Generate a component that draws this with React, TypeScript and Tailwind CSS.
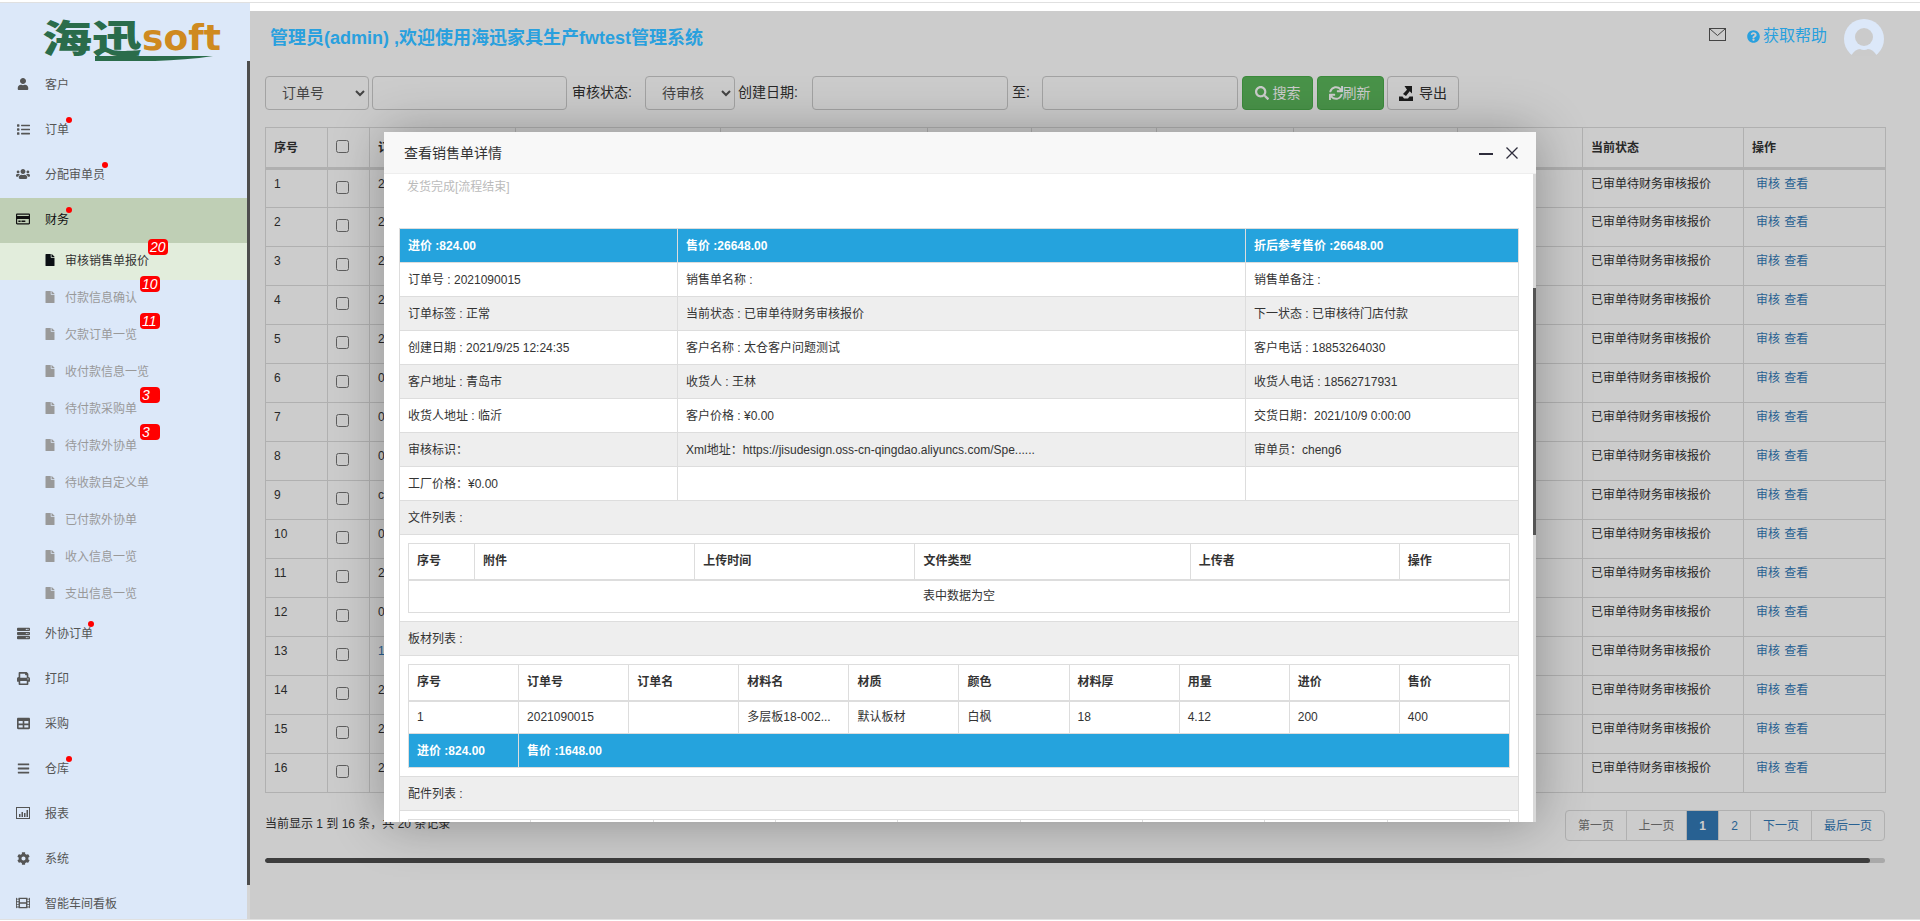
import React from 'react';
import {
  FaUser, FaList, FaUsers, FaRegCreditCard, FaFile, FaServer, FaPrint, FaTable,
  FaBars, FaCog, FaFilm, FaSearch, FaSync, FaQuestionCircle,
} from 'react-icons/fa';

const ReportIcon = () => (
  <svg width="14" height="12" viewBox="0 0 14 12" fill="currentColor">
    <path d="M0 0h14v12H0zM1 1v10h12V1z" fillRule="evenodd" />
    <path d="M3 7h1.5v3H3zM5.5 5H7v5H5.5zM8 6h1.5v4H8zM10.5 3H12v7h-1.5z" />
  </svg>
);

const ExportIcon = () => (
  <svg width="14" height="15" viewBox="0 0 14 15" fill="#222">
    <path d="M0 15v-4.5h3.5L5 12.5h4l1.5-2H14V15z" />
    <path d="M5.5 0H13v7.5l-2.3-2.3L7 10 4 8l4-4.2z" />
  </svg>
);

const menuTop = [
  { label: '客户', icon: <FaUser size={12} /> },
  { label: '订单', icon: <FaList size={13} />, dot: 'right-[-3px] top-[-5px]' },
  { label: '分配审单员', icon: <FaUsers size={14} />, dot: 'right-[-3px] top-[-5px]' },
  { label: '财务', icon: <FaRegCreditCard size={14} />, dot: 'right-[-3px] top-[-5px]', active: true },
];

const menuSub = [
  { label: '审核销售单报价', badge: '20', pos: 'left-[148px]', active: true },
  { label: '付款信息确认', badge: '10', pos: 'left-[140px]' },
  { label: '欠款订单一览', badge: '11', pos: 'left-[140px]' },
  { label: '收付款信息一览' },
  { label: '待付款采购单', badge: '3', pos: 'left-[140px]' },
  { label: '待付款外协单', badge: '3', pos: 'left-[140px]' },
  { label: '待收款自定义单' },
  { label: '已付款外协单' },
  { label: '收入信息一览' },
  { label: '支出信息一览' },
];

const menuBottom = [
  { label: '外协订单', icon: <FaServer size={13} />, dot: 'right-[-1px] top-[-5px]' },
  { label: '打印', icon: <FaPrint size={13} /> },
  { label: '采购', icon: <FaTable size={13} /> },
  { label: '仓库', icon: <FaBars size={13} />, dot: 'right-[-3px] top-[-5px]' },
  { label: '报表', icon: <ReportIcon /> },
  { label: '系统', icon: <FaCog size={13} /> },
  { label: '智能车间看板', icon: <FaFilm size={14} /> },
];

type MenuItem = { label: string; icon: React.ReactNode; dot?: string; active?: boolean };

const MainItem = ({ item }: { item: MenuItem }) => (
  <div className={`flex items-center h-[45px] pl-4 ${item.active ? 'bg-[#bfcfb5] text-[#111]' : 'text-[#555]'}`}>
    <span className="w-[14px] flex justify-center mb-[3px]">{item.icon}</span>
    <span className="relative ml-[15px] leading-[17px] mt-[-1px]">
      {item.label}
      {item.dot && <i className={`absolute w-[6px] h-[6px] rounded-full bg-[#f00] ${item.dot}`}></i>}
    </span>
  </div>
);

const Sidebar = () => (
  <aside className="relative z-40 flex w-[250px] shrink-0 bg-[#dce8f9] text-xs overflow-hidden">
    <div className="w-[247px] shrink-0">
      <div className="relative flex items-center h-[60px] pl-[42px]">
        <span className="font-['Noto_Sans_CJK_SC',sans-serif] font-black text-[50px] leading-none text-[#2a6c4b] scale-y-[0.76] translate-y-[2px]">海迅</span>
        <span className="font-['DejaVu_Sans',sans-serif] font-bold text-[36px] leading-none text-[#cf8a20] translate-y-[5px]">soft</span>
        <svg className="absolute left-[95px] top-[51px]" width="120" height="7" viewBox="0 0 120 7" fill="#2a6c4b">
          <path d="M0 2h118C100 5 80 6 60 7H0z" />
        </svg>
      </div>
      {menuTop.map((item) => <MainItem key={item.label} item={item} />)}
      {menuSub.map((item) => (
        <div
          key={item.label}
          className={`relative flex items-center h-[37px] pl-[44px] ${item.active ? 'bg-[#e2eddc] text-[#333]' : 'text-[#999]'}`}
        >
          <FaFile size={12} className={`mb-[3px] ${item.active ? 'text-[#0a0f14]' : 'text-[#999]'}`} />
          <span className="ml-[9px] mt-[-1px]">{item.label}</span>
          {item.badge && (
            <span className={`absolute top-[-4px] ${item.pos} w-[20px] h-[16px] rounded-[4px] bg-[#f00] text-white italic text-sm leading-[16px] pl-[2px]`}>
              {item.badge}
            </span>
          )}
        </div>
      ))}
      <div className="mt-[-1px]">
        {menuBottom.map((item) => <MainItem key={item.label} item={item} />)}
      </div>
    </div>
    <div className="flex flex-col w-[3px]">
      <div className="h-[58px] shrink-0"></div>
      <div className="h-[824px] shrink-0 bg-[#4d4d4d]"></div>
      <div className="flex-1 bg-[#d5d5d5]"></div>
    </div>
  </aside>
);

const colWidths = [
  'w-[62px]', 'w-[42px]', 'w-[146px]', 'w-[205px]', 'w-[207px]', 'w-[104px]',
  'w-[125px]', 'w-[137px]', 'w-[164px]', 'w-[125px]', 'w-[161px]', 'w-[142px]',
];

// only the first character of each order number shows beside the dialog
const orderChars = ['2', '2', '2', '2', '2', '0', '0', '0', 'c', '0', '2', '0', '1', '2', '2', '2'];

const BackgroundTable = () => (
  <table className="table-fixed w-[1620px] border-collapse text-xs text-[#333]">
    <colgroup>
      {colWidths.map((w, i) => <col key={i} className={w} />)}
    </colgroup>
    <thead>
      <tr className="h-[41px]">
        {colWidths.map((_, i) => (
          <th key={i} className="border border-[#ddd] border-b-[3px] px-2 text-left font-bold">
            {i === 0 && '序号'}
            {i === 1 && <input type="checkbox" className="block mb-[2px]" />}
            {i === 2 && '订'}
            {i === 10 && '当前状态'}
            {i === 11 && '操作'}
          </th>
        ))}
      </tr>
    </thead>
    <tbody>
      {orderChars.map((order, r) => (
        <tr key={r} className="h-[39px]">
          <td className="border border-[#ddd] px-2 pt-[6px] align-top leading-[17px]">{r + 1}</td>
          <td className="border border-[#ddd] align-top pl-2 pt-[11px]">
            <input type="checkbox" className="block" />
          </td>
          <td className={`border border-[#ddd] px-2 pt-[6px] align-top leading-[17px] ${r === 12 ? 'text-[#337ab7]' : ''}`}>{order}</td>
          {[3, 4, 5, 6, 7, 8, 9].map((c) => <td key={c} className="border border-[#ddd]"></td>)}
          <td className="border border-[#ddd] px-2 pt-[6px] align-top leading-[17px]">已审单待财务审核报价</td>
          <td className="border border-[#ddd] pl-[12px] pt-[6px] align-top leading-[17px] text-[#337ab7]">
            审核 <span className="ml-[1px]">查看</span>
          </td>
        </tr>
      ))}
    </tbody>
  </table>
);

const infoRows = [
  ['订单号 : 2021090015', '销售单名称 :', '销售单备注 :'],
  ['订单标签 : 正常', '当前状态 : 已审单待财务审核报价', '下一状态 : 已审核待门店付款'],
  ['创建日期 : 2021/9/25 12:24:35', '客户名称 : 太仓客户问题测试', '客户电话 : 18853264030'],
  ['客户地址 : 青岛市', '收货人 : 王林', '收货人电话 : 18562717931'],
  ['收货人地址 : 临沂', '客户价格 : ¥0.00', '交货日期：2021/10/9 0:00:00'],
  ['审核标识：', 'Xml地址：https://jisudesign.oss-cn-qingdao.aliyuncs.com/Spe......', '审单员：cheng6'],
  ['工厂价格：¥0.00', '', ''],
];

const fileCols = [
  { label: '序号', w: 'w-[66px]' },
  { label: '附件', w: 'w-[220px]' },
  { label: '上传时间', w: 'w-[220px]' },
  { label: '文件类型', w: 'w-[275px]' },
  { label: '上传者', w: 'w-[209px]' },
  { label: '操作', w: 'w-[110px]' },
];

const boardCols = ['序号', '订单号', '订单名', '材料名', '材质', '颜色', '材料厚', '用量', '进价', '售价'];
const boardRow = ['1', '2021090015', '', '多层板18-002...', '默认板材', '白枫', '18', '4.12', '200', '400'];

const SectionRow = ({ label }: { label: string }) => (
  <tr className="h-[34px] bg-[#eee]">
    <td colSpan={3} className="border border-[#ddd] px-2">{label}</td>
  </tr>
);

const Modal = () => (
  <div className="absolute left-[134px] top-[121px] z-30 flex flex-col w-[1152px] h-[690px] bg-white text-xs text-[#333] shadow-[1px_1px_50px_rgba(0,0,0,0.3)]">
    <div className="flex items-center justify-between shrink-0 h-[42px] bg-[#f8f8f8] border-b border-[#eee] pl-5 pr-[18px]">
      <span className="text-sm">查看销售单详情</span>
      <div className="flex items-center gap-[13px]">
        <i className="block w-[14px] h-[2px] bg-[#2e2d3c] mt-[2px]"></i>
        <svg width="12" height="12" viewBox="0 0 12 12" stroke="#2e2d3c" strokeWidth="1.3" fill="none">
          <path d="M0.5 0.5l11 11M11.5 0.5l-11 11" />
        </svg>
      </div>
    </div>
    <div className="flex flex-1 min-h-0">
      <div className="flex-1 min-w-0 overflow-hidden pl-[15px] pr-[15px]">
        <p className="pl-2 pt-[5px] h-[54px] leading-[17px] text-[#bbb]">发货完成[流程结束]</p>
        <table className="table-fixed w-[1119px] border-collapse">
          <colgroup>
            <col className="w-[278px]" />
            <col className="w-[568px]" />
            <col className="w-[273px]" />
          </colgroup>
          <tbody>
            <tr className="h-[34px] bg-[#25a3dd] text-white font-bold">
              <td className="border border-[#ddd] px-2">进价 :824.00</td>
              <td className="border border-[#ddd] px-2">售价 :26648.00</td>
              <td className="border border-[#ddd] px-2">折后参考售价 :26648.00</td>
            </tr>
            {infoRows.map((row, i) => (
              <tr key={i} className={`h-[34px] ${i % 2 === 1 ? 'bg-[#eee]' : ''}`}>
                {row.map((cell, c) => <td key={c} className="border border-[#ddd] px-2">{cell}</td>)}
              </tr>
            ))}
            <SectionRow label="文件列表 :" />
            <tr>
              <td colSpan={3} className="border border-[#ddd] p-2">
                <table className="table-fixed w-full border-collapse">
                  <colgroup>{fileCols.map((c) => <col key={c.label} className={c.w} />)}</colgroup>
                  <thead>
                    <tr className="h-[36px]">
                      {fileCols.map((c) => (
                        <th key={c.label} className="border border-[#ddd] border-b-2 px-2 text-left font-bold">{c.label}</th>
                      ))}
                    </tr>
                  </thead>
                  <tbody>
                    <tr className="h-[33px]">
                      <td colSpan={6} className="border border-[#ddd] text-center">表中数据为空</td>
                    </tr>
                  </tbody>
                </table>
              </td>
            </tr>
            <SectionRow label="板材列表 :" />
            <tr>
              <td colSpan={3} className="border border-[#ddd] p-2">
                <table className="table-fixed w-full border-collapse">
                  <thead>
                    <tr className="h-[36px]">
                      {boardCols.map((c) => (
                        <th key={c} className="border border-[#ddd] border-b-2 px-2 text-left font-bold">{c}</th>
                      ))}
                    </tr>
                  </thead>
                  <tbody>
                    <tr className="h-[33px]">
                      {boardRow.map((c, i) => <td key={i} className="border border-[#ddd] px-2 truncate">{c}</td>)}
                    </tr>
                    <tr className="h-[34px] bg-[#25a3dd] text-white font-bold">
                      <td className="border border-[#ddd] px-2">进价 :824.00</td>
                      <td colSpan={9} className="border border-[#ddd] px-2">售价 :1648.00</td>
                    </tr>
                  </tbody>
                </table>
              </td>
            </tr>
            <SectionRow label="配件列表 :" />
            <tr>
              <td colSpan={3} className="border border-[#ddd] p-2">
                <table className="table-fixed w-full border-collapse">
                  <tbody>
                    <tr className="h-[36px]">
                      {Array.from({ length: 9 }).map((_, i) => <td key={i} className="border border-[#ddd]"></td>)}
                    </tr>
                  </tbody>
                </table>
              </td>
            </tr>
          </tbody>
        </table>
      </div>
      <div className="flex flex-col w-[3px] shrink-0 bg-[#d9d9d9]">
        <div className="h-[114px] shrink-0"></div>
        <div className="h-[247px] shrink-0 bg-[#555]"></div>
      </div>
    </div>
  </div>
);

const inputClass = 'h-[34px] border border-[#ccc] rounded-[4px] bg-white shrink-0';
const selectClass = 'h-[34px] border border-[#ccc] rounded-[4px] bg-white shrink-0 pl-[12px] text-sm text-[#555]';

const Toolbar = () => (
  <div className="flex items-center h-[34px] text-sm text-[#333]">
    <select className={`${selectClass} w-[104px]`} defaultValue="订单号">
      <option>订单号</option>
    </select>
    <input className={`${inputClass} w-[195px] ml-[3px]`} />
    <span className="w-[61px] ml-[5px] mt-[-2px] whitespace-nowrap">审核状态:</span>
    <select className={`${selectClass} w-[90px] ml-[12px]`} defaultValue="待审核">
      <option>待审核</option>
    </select>
    <span className="w-[61px] ml-[3px] mt-[-2px] whitespace-nowrap">创建日期:</span>
    <input className={`${inputClass} w-[196px] ml-[13px]`} />
    <span className="w-[18px] ml-[4px] mt-[-2px] whitespace-nowrap">至:</span>
    <input className={`${inputClass} w-[196px] ml-[12px]`} />
    <button className="flex items-center justify-center h-[34px] w-[71px] ml-[4px] rounded-[4px] bg-[#5cb85c] border border-[#4cae4c] text-white">
      <FaSearch size={14} className="mr-[4px]" />搜索
    </button>
    <button className="flex items-center justify-center h-[34px] w-[67px] ml-[4px] pr-[2px] rounded-[4px] bg-[#5cb85c] border border-[#4cae4c] text-white">
      <FaSync size={14} />刷新
    </button>
    <button className="flex items-center justify-center h-[34px] w-[72px] ml-[3px] rounded-[4px] bg-white border border-[#ccc] text-[#333]">
      <ExportIcon /><span className="ml-[6px]">导出</span>
    </button>
  </div>
);

const pages = [
  { label: '第一页', w: 'w-[61px]', color: 'text-[#777]' },
  { label: '上一页', w: 'w-[60px]', color: 'text-[#777]' },
  { label: '1', w: 'w-[32px]', color: 'text-white bg-[#337ab7] font-bold' },
  { label: '2', w: 'w-[32px]', color: 'text-[#337ab7]' },
  { label: '下一页', w: 'w-[61px]', color: 'text-[#337ab7]' },
  { label: '最后一页', w: 'w-[72px]', color: 'text-[#337ab7]' },
];

const App = () => (
  <div className="flex flex-col h-screen overflow-hidden bg-white font-['Liberation_Sans','Noto_Sans_CJK_SC',sans-serif]">
    <div className="h-[3px] shrink-0 border-b border-[#e0e0e0]"></div>
    <div className="flex flex-1 min-h-0">
      <Sidebar />
      <div className="flex flex-col flex-1 min-w-0">
        <div className="h-[8px] shrink-0 bg-white"></div>
        <main className="relative flex-1 min-h-0 overflow-hidden bg-white pl-[15px] pr-[35px]">
          <header className="relative z-20 flex items-start justify-between h-[65px] pl-[5px]">
            <h1 className="mt-[16px] text-[18px] leading-[22px] font-bold text-[#29a0de]">
              管理员(admin) ,欢迎使用海迅家具生产fwtest管理系统
            </h1>
            <div className="flex items-start mr-px">
              <svg className="mt-[17px]" width="17" height="13" viewBox="0 0 17 13" fill="none" stroke="#444" strokeWidth="1">
                <rect x="0.5" y="0.5" width="16" height="12" />
                <path d="M1 1l7.5 6.5L16 1" />
              </svg>
              <span className="flex items-center ml-[21px] mt-[16px] text-base leading-[18px] text-[#29a0de]">
                <FaQuestionCircle size={13} className="mr-[3px]" />获取帮助
              </span>
              <svg className="ml-[17px] mt-[8px]" width="40" height="37" viewBox="0 0 40 37">
                <circle cx="20" cy="20" r="20" fill="#dce8f9" />
                <circle cx="20" cy="18" r="9" fill="#cbcbcb" />
                <path d="M7 37q4-7 9-7 4 2 8 0 5 0 9 7z" fill="#cbcbcb" />
              </svg>
            </div>
          </header>
          <Toolbar />
          <div className="mt-[17px]">
            <BackgroundTable />
          </div>
          <div className="relative flex items-start justify-between mt-[17px] text-xs text-[#333]">
            <span className="mt-[6px] leading-[17px]">当前显示 1 到 16 条，共 20 条记录</span>
            <nav className="flex h-[31px] border border-[#ddd] rounded-[4px] overflow-hidden">
              {pages.map((p, i) => (
                <span key={p.label} className={`flex items-center justify-center ${p.w} ${p.color} ${i < pages.length - 1 ? 'border-r border-[#ddd]' : ''}`}>
                  {p.label}
                </span>
              ))}
            </nav>
          </div>
          <div className="mt-[17px] h-[5px] w-[1620px] rounded-[3px] bg-[#d4d4d4] overflow-hidden">
            <div className="h-full w-[1605px] rounded-[3px] bg-[#4d4d4d]"></div>
          </div>
          <div className="absolute inset-0 z-10 bg-black/20"></div>
          <Modal />
        </main>
      </div>
    </div>
    <div className="h-[2px] shrink-0 border-t border-[#e0e0e0]"></div>
  </div>
);

export default App;
